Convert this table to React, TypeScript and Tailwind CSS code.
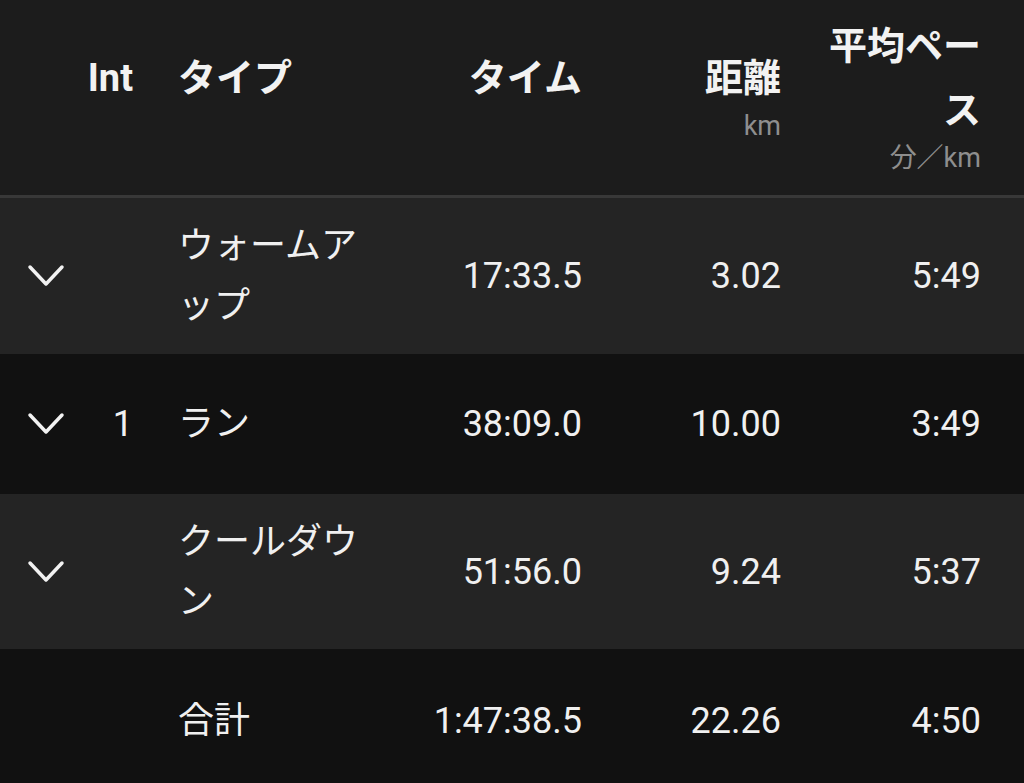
const font = {
  fontFamily: 'Roboto, "Noto Sans CJK JP", sans-serif',
};

type Row = {
  int?: string;
  type: string;
  time: string;
  dist: string;
  pace: string;
  expandable: boolean;
  bg: string;
  h: string;
};

const rows: Row[] = [
  { type: "ウォームアップ", time: "17:33.5", dist: "3.02", pace: "5:49", expandable: true, bg: "bg-[#242424]", h: "h-[156px]" },
  { int: "1", type: "ラン", time: "38:09.0", dist: "10.00", pace: "3:49", expandable: true, bg: "bg-[#111111]", h: "h-[140px]" },
  { type: "クールダウン", time: "51:56.0", dist: "9.24", pace: "5:37", expandable: true, bg: "bg-[#242424]", h: "h-[155px]" },
];

const Chevron = () => (
  <svg width="40" height="26" viewBox="0 0 40 26" fill="none">
    <polyline points="4,4 20,21 36,4" stroke="#f2f2f2" strokeWidth="3.5" strokeLinecap="round" strokeLinejoin="round" />
  </svg>
);

const HeaderCell = ({ title, unit, className }: { title: string; unit?: string; className: string }) => (
  <div className={`flex flex-col items-end justify-center text-right ${className}`}>
    <div className="text-[38px] font-bold leading-[64px] text-[#f2f2f2]">{title}</div>
    <div className="h-[33px] text-[27px] leading-[33px] text-[#8e8e8e]">{unit}</div>
  </div>
);

export default function App() {
  return (
    <div className="w-[1024px] h-[783px] flex flex-col bg-[#111111] overflow-hidden" style={font}>
      {/* header */}
      <div className="h-[195px] flex items-center bg-[#1c1c1c] pr-[43px] pb-[6px]">
        <div className="w-[92px]" />
        <HeaderCell title="Int" className="w-[41px]" />
        <div className="w-[45px]" />
        <div className="w-[185px] flex flex-col justify-center">
          <div className="text-[38px] font-bold leading-[64px] text-[#f2f2f2]">タイプ</div>
          <div className="h-[33px]" />
        </div>
        <HeaderCell title="タイム" className="w-[219px]" />
        <HeaderCell title="距離" unit="km" className="w-[199px]" />
        <div className="w-[200px] flex flex-col items-end justify-center text-right">
          <div className="w-[165px] text-[38px] font-bold leading-[64px] text-[#f2f2f2]">平均ペース</div>
          <div className="h-[33px] text-[27px] leading-[33px] text-[#8e8e8e]">分／km</div>
        </div>
      </div>
      <div className="h-[3px] bg-[#383838]" />

      {rows.map((r, i) => (
        <div key={i} className={`flex items-center pr-[43px] text-[36px] leading-[60px] text-[#f0f0f0] ${r.bg} ${r.h}`}>
          <div className="w-[92px] flex justify-center">{r.expandable && <Chevron />}</div>
          <div className="w-[41px] text-right">{r.int}</div>
          <div className="w-[45px]" />
          <div className="w-[185px]">{r.type}</div>
          <div className="w-[219px] text-right">{r.time}</div>
          <div className="w-[199px] text-right">{r.dist}</div>
          <div className="w-[200px] text-right">{r.pace}</div>
        </div>
      ))}

      {/* total */}
      <div className="flex-1 flex items-center pr-[43px] pt-[10px] text-[36px] leading-[60px] text-[#f0f0f0] bg-[#111111]">
        <div className="w-[92px]" />
        <div className="w-[41px]" />
        <div className="w-[45px]" />
        <div className="w-[185px]">合計</div>
        <div className="w-[219px] text-right">1:47:38.5</div>
        <div className="w-[199px] text-right">22.26</div>
        <div className="w-[200px] text-right">4:50</div>
      </div>
    </div>
  );
}
